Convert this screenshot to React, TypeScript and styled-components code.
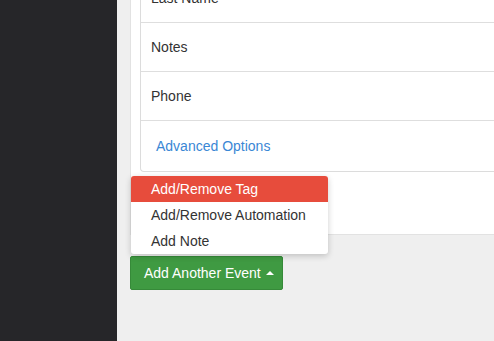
import React from 'react'
import styled, {createGlobalStyle} from 'styled-components'

const GlobalStyle = createGlobalStyle`
    html, body{
        margin: 0;
        padding: 0;
        height: 100%;
        overflow: hidden;
        font-family: "Liberation Sans", Arial, sans-serif;
    }
    #root{
        height: 100%;
    }
`

const Layout = styled.div`
    display: flex;
    height: 341px;
    overflow: hidden;
`

const Sidebar = styled.aside`
    width: 117px;
    flex-shrink: 0;
    background: #262629;
`

const Main = styled.main`
    flex: 1;
    min-width: 0;
    background: #efefef;
    padding-left: 13px;
    overflow: hidden;
`

const Panel = styled.section`
    width: 420px;
    margin-top: -26px;
    padding: 0 0 62px 9px;
    background: #fff;
    border: 1px solid #e2e2e2;
    border-top: none;
    border-right: none;
`

const Card = styled.div`
    border: 1px solid #dcdcdc;
    border-right: none;
    border-radius: 4px 0 0 4px;
    border-top: none;
`

const Row = styled.div<{$link?: boolean}>`
    display: flex;
    align-items: center;
    height: ${p => p.$link ? '50px' : '48px'};
    padding-left: ${p => p.$link ? '15px' : '10px'};
    font-size: 14px;
    color: ${p => p.$link ? '#3a87d5' : '#333'};
    border-bottom: ${p => p.$link ? 'none' : '1px solid #dedede'};
`

const Actions = styled.div`
    position: relative;
    margin-top: 21px;
    display: inline-block;
`

const Menu = styled.ul`
    position: absolute;
    left: 1px;
    bottom: calc(100% + 2px);
    width: 197px;
    margin: 0;
    padding: 0;
    list-style: none;
    background: #fff;
    border-radius: 3px;
    box-shadow: 0 2px 6px rgba(0,0,0,0.2);
    overflow: hidden;
`

const MenuItem = styled.li<{$active?: boolean}>`
    height: 26px;
    line-height: 26px;
    padding-left: 20px;
    font-size: 14px;
    color: ${p => p.$active ? '#fff' : '#333'};
    background: ${p => p.$active ? '#e74c3c' : 'transparent'};
`

const Button = styled.button`
    display: flex;
    align-items: center;
    gap: 5px;
    height: 34px;
    width: 153px;
    padding: 0 0 0 13px;
    border: 1px solid #368a39;
    border-radius: 2px;
    background: #3f9a42;
    color: #fff;
    font-family: inherit;
    font-size: 14px;
`

const Caret = styled.span`
    width: 0;
    height: 0;
    border-left: 4px solid transparent;
    border-right: 4px solid transparent;
    border-bottom: 4px solid #fff;
`

const App = () => {
    return (
        <Layout>
            <GlobalStyle />
            <Sidebar />
            <Main>
                <Panel>
                    <Card>
                        <Row>Last Name</Row>
                        <Row>Notes</Row>
                        <Row>Phone</Row>
                        <Row $link>Advanced Options</Row>
                    </Card>
                </Panel>
                <Actions>
                    <Menu>
                        <MenuItem $active>Add/Remove Tag</MenuItem>
                        <MenuItem>Add/Remove Automation</MenuItem>
                        <MenuItem>Add Note</MenuItem>
                    </Menu>
                    <Button>Add Another Event <Caret /></Button>
                </Actions>
            </Main>
        </Layout>
    )
}

export default App
